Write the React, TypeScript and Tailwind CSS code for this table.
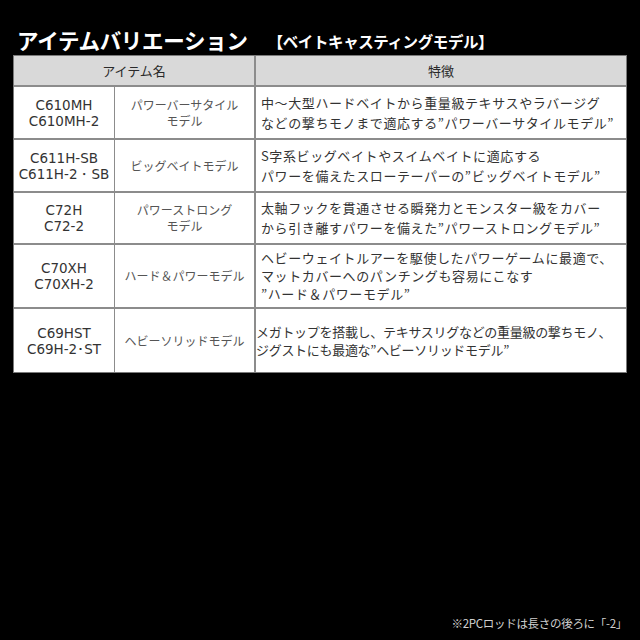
const rows = [
  {
    code: ["C610MH", "C610MH-2"],
    name: ["パワーバーサタイル", "モデル"],
    desc: ["中～大型ハードベイトから重量級テキサスやラバージグ", "などの撃ちモノまで適応する”パワーバーサタイルモデル”"],
    h: "h-[53px]",
    lh: "leading-[20px]",
  },
  {
    code: ["C611H-SB", "C611H-2・SB"],
    name: ["ビッグベイトモデル"],
    desc: ["S字系ビッグベイトやスイムベイトに適応する", "パワーを備えたスローテーパーの”ビッグベイトモデル”"],
    h: "h-[53px]",
    lh: "leading-[20px]",
  },
  {
    code: ["C72H", "C72-2"],
    name: ["パワーストロング", "モデル"],
    desc: ["太軸フックを貫通させる瞬発力とモンスター級をカバー", "から引き離すパワーを備えた”パワーストロングモデル”"],
    h: "h-[52px]",
    lh: "leading-[20px]",
  },
  {
    code: ["C70XH", "C70XH-2"],
    name: ["ハード＆パワーモデル"],
    desc: ["ヘビーウェイトルアーを駆使したパワーゲームに最適で、", "マットカバーへのパンチングも容易にこなす", "”ハード＆パワーモデル”"],
    h: "h-[64px]",
    lh: "leading-[18px]",
  },
  {
    code: ["C69HST", "C69H-2･ST"],
    name: ["ヘビーソリッドモデル"],
    desc: ["メガトップを搭載し、テキサスリグなどの重量級の撃ちモノ、", "ジグストにも最適な”ヘビーソリッドモデル”"],
    h: "h-[63px]",
    lh: "leading-[18px]",
    tight: true,
  },
];

const jp = "font-['Noto_Sans_CJK_JP',sans-serif]";

export default function App() {
  return (
    <div className={`w-[640px] h-[640px] bg-black flex flex-col ${jp}`}>
      {/* Title */}
      <div className="flex items-end h-[55px] pl-[17px] pb-[5px]">
        <h1 className="text-[21.5px] leading-none font-bold text-white tracking-[-0.3px]">
          アイテムバリエーション
        </h1>
        <span className="ml-[20px] mb-[1px] text-[15.5px] leading-none font-bold text-white tracking-[-0.4px]">
          【ベイトキャスティングモデル】
        </span>
      </div>

      {/* Table */}
      <div className="mx-[13px] w-[614px] bg-white border border-[#7a7a7a]">
        <div className="flex h-[31px] bg-[#d9d9d9] border-b-2 border-[#8c8c8c] text-[#2a2a2a] text-[13px]">
          <div className="w-[242px] flex items-center justify-center border-r-2 border-[#8c8c8c]">
            アイテム名
          </div>
          <div className="flex-1 flex items-center justify-center">特徴</div>
        </div>
        {rows.map((r, i) => (
          <div
            key={i}
            className={`flex ${r.h} ${i < rows.length - 1 ? "border-b-2 border-[#8c8c8c]" : ""}`}
          >
            <div className="w-[101px] flex flex-col items-center justify-center border-r border-[#8c8c8c] font-['DejaVu_Sans',sans-serif] text-[13.5px] leading-[16px] text-[#333]">
              {r.code.map((c) => (
                <span key={c}>{c}</span>
              ))}
            </div>
            <div className="w-[141px] flex flex-col items-center justify-center border-r-2 border-[#8c8c8c] text-[12px] leading-[16px] text-[#555]">
              {r.name.map((n) => (
                <span key={n}>{n}</span>
              ))}
            </div>
            <div
              className={`flex-1 flex flex-col justify-center text-[13px] text-[#333] whitespace-nowrap ${r.lh} ${
                r.tight ? "pl-0 tracking-[-0.3px]" : "pl-[5px] tracking-[0.6px]"
              }`}
            >
              {r.desc.map((d) => (
                <span key={d}>{d}</span>
              ))}
            </div>
          </div>
        ))}
      </div>

      {/* Footnote */}
      <div className="mt-auto mb-[8px] pr-[13px] flex justify-end text-[11.5px] text-[#d0d0d0] tracking-[-0.3px]">
        ※2PCロッドは長さの後ろに「-2」
      </div>
    </div>
  );
}
